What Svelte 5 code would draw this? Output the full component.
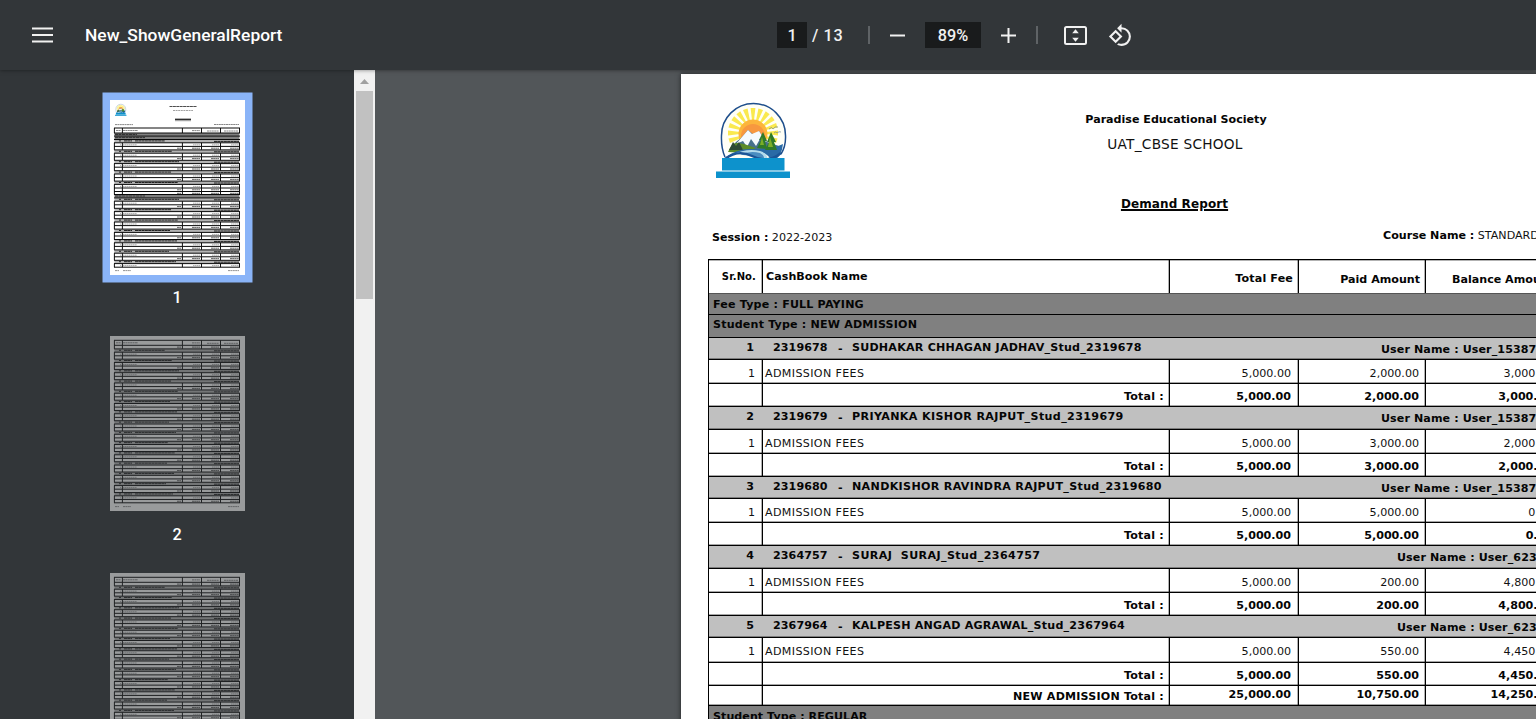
<script>
  const groups = [
    { no: 1, id: '2319678', name: 'SUDHAKAR CHHAGAN JADHAV_Stud_2319678', ls: .22, user: 'User_15387', ux: 672, paid: '2,000.00', bal: '3,000.00', h: [22, 24, 23] },
    { no: 2, id: '2319679', name: 'PRIYANKA KISHOR RAJPUT_Stud_2319679', ls: .37, user: 'User_15387', ux: 672, paid: '3,000.00', bal: '2,000.00', h: [23, 24, 23] },
    { no: 3, id: '2319680', name: 'NANDKISHOR RAVINDRA RAJPUT_Stud_2319680', ls: .33, user: 'User_15387', ux: 672, paid: '5,000.00', bal: '0.00', h: [22, 24, 23] },
    { no: 4, id: '2364757', name: 'SURAJ\u00a0 SURAJ_Stud_2364757', ls: .4, user: 'User_623', ux: 688, paid: '200.00', bal: '4,800.00', h: [23, 24, 23] },
    { no: 5, id: '2367964', name: 'KALPESH ANGAD AGRAWAL_Stud_2367964', ls: .21, user: 'User_623', ux: 688, paid: '550.00', bal: '4,450.00', h: [22, 25, 23] }
  ];

  const cols = [4.4, 12.4, 72.4, 91.5, 110.5, 129.5];

  // Builds the miniature rows: kind is head, dark, band, row or sum
  function mini(first) {
    const out = [];
    let y = first ? 28 : 4.3;
    const add = (kind, h, seed = 0) => { out.push({ kind, y, h, seed }); y += h; };
    add('head', 5);
    if (first) {
      add('dark', 3.1); add('dark', 3.4);
      for (let i = 0; i < 5; i++) { add('band', 3.3, i); add('row', 3.6); add('sum', 3.5); }
      add('sum', 3); add('dark', 3.4);
      for (let i = 0; i < 7; i++) { add('band', 3.3, i + 2); add('row', 3.6); if (i < 6) add('sum', 3.5); }
    } else {
      add('sum', 3.6);
      for (let i = 0; i < 15; i++) { add('band', 3.3, i); add('row', 3.6); add('sum', 3.36); }
    }
    return { rows: out, end: y };
  }
  const thumbs = [
    { n: 1, first: true, ...mini(true) },
    { n: 2, first: false, ...mini(false) },
    { n: 3, first: false, ...mini(false) }
  ];
  const rays = Array.from({ length: 13 }, (_, i) => -108 + i * 18);
</script>

{#snippet logo()}
  <circle cx="37.500" cy="33" r="31" fill="#fffff6" />
  <g transform="translate(37 31)">
    {#each rays as a}
      <path d="M-1-13 L-2.400-25 L2.400-25 L1-13Z" fill="#fae94e" transform="rotate({a})" />
    {/each}
  </g>
  <circle cx="37" cy="32" r="14.500" fill="#fcb53c" />
  <circle cx="37" cy="34" r="12" fill="#f7983f" />
  <path d="M14 47 L20 40 L25 36 L32 28 L38 33 L43 29 L51 40 L63 44 L62 49 L28 51Z" fill="#46708c" />
  <path d="M20 42 L26 35 L32 28 L36 32 L43 29 L50 40 L44 37 L40 44 L35 37 L31 45 L27 39Z" fill="#f5fafd" />
  <path d="M12 50 Q16 40 22 41 L28 42 L40 46 L29 51Z" fill="#5b8c28" />
  <path d="M13 48 L17 40 L20 44 L23 40 L27 48Z" fill="#2c4a34" />
  <path d="M8 56 Q22 46 36 47 Q54 48 67 42 Q66 56 54 61 Q56 53 44 50 Q26 48 8 56Z" fill="#2a6aa6" />
  <path d="M16 53 Q30 46 44 49 Q54 52 50 60 Q33 50 16 53Z" fill="#b4dbec" />
  <path d="M24 53 Q34 48 44 51 Q50 54 48 60 Q37 52 24 53Z" fill="#4a8cc0" />
  <path d="M41 46 L45 38 L43 38 L47 30 L51 39 L49 39 L51 47Z M49 48 L53 40 L51 40 L55 30 L60 40 L58 40 L61 48Z" fill="#2f7a28" />
  <path d="M46 35 L48 43 L44 43Z M54 35 L57 45 L52 45Z" fill="#7cae28" />
  <path d="M9 55 Q5 46 5.500 33.500 A32 32 0 0 1 69.500 33.500 Q70 44 65 52" fill="none" stroke="#1f4f8c" stroke-width="1.500" />
  <path d="M9 57 Q22 47 36 54 Q52 62 65 51" fill="none" stroke="#1c5596" stroke-width="2.400" />
  <path d="M53 27 q3-3 4 0 q2-3 5-2 M58 31 q2-2 3 0 q2-2 4-1" fill="none" stroke="#6e858f" stroke-width=".7" />
  <rect x="6" y="56" width="62.500" height="12.500" fill="#0d92cc" />
  <rect x="0" y="69.500" width="74" height="6.500" fill="#0d92cc" />
{/snippet}

{#snippet thumb(t)}
  <svg viewBox="0 0 135 175" width="135" height="175">
    <rect width="135" height="175" fill="#fff" />
    {#if t.first}
      <g transform="translate(5 4) scale(.155)">{@render logo()}</g>
      <g stroke="#222" fill="none">
        <path d="M59.5 6.500H87" stroke-width="1" stroke-dasharray="3 .4" opacity=".8" />
        <path d="M63 10.500H83" stroke-width=".7" stroke-dasharray="2 .6" opacity=".6" />
        <path d="M65 19.300H81" stroke-width="1.300" /><path d="M65 20.700H81" stroke-width=".5" />
        <path d="M5 24.600H23M104 24.500H129" stroke-width=".9" stroke-dasharray="2 .4" opacity=".6" />
      </g>
    {/if}
    {#each t.rows as r}
      {#if r.kind === 'dark'}
        <rect x="4.400" y={r.y} width="125" height={r.h} fill="#808080" />
        <path d="M5 {r.y + 1.5}H{r.y > 34 ? 35 : 27}" stroke="#333" stroke-width="1" stroke-dasharray="3 .5" />
      {:else if r.kind === 'band'}
        <rect x="4.400" y={r.y} width="125" height={r.h} fill="#b4b4b4" />
        <path d="M9 {r.y + 1.4}h2M14 {r.y + 1.4}h8M25 {r.y + 1.4}H{55 + (r.seed * 7) % 15}M104 {r.y + 1.9}h25" stroke="#222" stroke-width="1" stroke-dasharray="3 .3" />
      {:else}
        {#each cols as x}<path d="M{x} {r.y}v{r.h}" stroke="#111" stroke-width="1" />{/each}
        {#if r.kind === 'head'}
          <path d="M6 {r.y + 2.5}h5M13 {r.y + 2.5}h15M82 {r.y + 2.6}h8M97 {r.y + 3}h12M114 {r.y + 3}h14" stroke="#555" stroke-width=".7" stroke-dasharray="2 .4" />
        {:else if r.kind === 'row'}
          <path d="M10 {r.y + 2}h1M13 {r.y + 2}h14M83 {r.y + 2}h7M102 {r.y + 2}h7M121 {r.y + 2}h8" stroke="#888" stroke-width=".7" stroke-dasharray="1.6 .4" />
        {:else}
          <path d="M67 {r.y + 1.8}h4M82 {r.y + 1.8}h8M101 {r.y + 1.8}h8M120 {r.y + 1.8}h9" stroke="#555" stroke-width=".9" stroke-dasharray="2 .2" />
        {/if}
      {/if}
      <path d="M4 {r.y}H130" stroke="#0a0a0a" stroke-width="1" />
    {/each}
    <path d="M4 {t.end}H130" stroke="#0a0a0a" stroke-width="1" />
    <path d="M5 170.600h4M13 170.600h8M118 170.600h11" stroke="#666" stroke-width=".7" stroke-dasharray="2 .4" />
  </svg>
{/snippet}

<div class="viewer">
  <header>
    <div class="start">
      <svg class="menu" width="21" height="16" viewBox="0 0 21 16"><path d="M0 1.500h21M0 8h21M0 14.500h21" stroke="#f1f1f1" stroke-width="2.200" /></svg>
      <span class="title">New_ShowGeneralReport</span>
    </div>
    <div class="controls">
      <span class="field page-no">1</span><span class="count">/ 13</span>
      <i class="sep"></i>
      <svg class="minus" width="16" height="16" viewBox="0 0 16 16"><path d="M0 8.500h15" stroke="#f1f1f1" stroke-width="2" /></svg>
      <span class="field zoom">89%</span>
      <svg class="plus" width="16" height="16" viewBox="0 0 16 16"><path d="M0 8.500h15M7.500 1v15" stroke="#f1f1f1" stroke-width="2" /></svg>
      <i class="sep two"></i>
      <svg class="fit" width="23" height="19" viewBox="0 0 23 19"><rect x="1" y="1" width="21" height="17" rx="1.500" fill="none" stroke="#f1f1f1" stroke-width="2" /><path d="M11.500 3.200l3.300 4H8.200ZM11.500 15.800l3.300-4H8.200Z" fill="#f1f1f1" /></svg>
      <svg class="rotate" width="25" height="25" viewBox="0 0 24 24"><path d="M7.340 6.410.86 12.900l6.490 6.480 6.490-6.480-6.500-6.490ZM3.690 12.900l3.660-3.660L11 12.900l-3.660 3.660-3.650-3.660ZM19.360 6.640A8.950 8.950 0 0 0 13 4V.76L8.760 5 13 9.240V6c1.790 0 3.580.68 4.950 2.050a7.007 7.007 0 0 1 0 9.900A6.973 6.973 0 0 1 13 20c-.97 0-1.940-.21-2.840-.61l-1.490 1.490C10.020 21.620 11.510 22 13 22c2.300 0 4.610-.88 6.360-2.640a8.980 8.980 0 0 0 0-12.720Z" fill="#f1f1f1" /></svg>
    </div>
  </header>
  <main>
    <aside>
      {#each thumbs as t}
        <div class="thumb" class:active={t.first}>
          <div class="sheet">{@render thumb(t)}</div>
          <span>{t.n}</span>
        </div>
      {/each}
    </aside>
    <div class="scroll">
      <svg width="21" height="21" viewBox="0 0 21 21"><path d="M6 14l4.500-5 4.500 5Z" fill="#a0a0a0" /></svg>
      <div class="handle"></div>
    </div>
    <section class="canvas">
      <article>
        <div class="top">
          <svg class="logo" width="74" height="76" viewBox="0 0 74 76">{@render logo()}</svg>
          <div class="heads">
            <b class="society">Paradise Educational Society</b>
            <span class="school">UAT_CBSE SCHOOL</span>
            <b class="report">Demand Report</b>
          </div>
        </div>
        <div class="meta">
          <span><b>Session :</b> 2022-2023</span>
          <span class="course"><b>Course Name :</b> STANDARD</span>
        </div>
        <div class="table">
          <div class="row head">
            <b class="c sr">Sr.No.</b><b class="c cb">CashBook Name</b><b class="c tf">Total Fee</b><b class="c pa">Paid Amount</b><b class="c ba">Balance Amount</b>
          </div>
          <div class="dark fee"><b>Fee Type : FULL PAYING</b></div>
          <div class="dark stu"><b>Student Type : NEW ADMISSION</b></div>
          {#each groups as g}
            <div class="band" style:height="{g.h[0]}px">
              <b class="n">{g.no}</b><b class="id">{g.id}</b><b class="dash">-</b><b style:letter-spacing="{g.ls}px">{g.name}</b>
              <b class="user" style:left="{g.ux}px">User Name : {g.user}</b>
            </div>
            <div class="row item" style:height="{g.h[1]}px">
              <span class="c num">1</span><span class="c fees">ADMISSION FEES</span><span class="c amt">5,000.00</span><span class="c">{g.paid}</span><span class="c">{g.bal}</span>
            </div>
            <div class="row total" style:height="{g.h[2]}px">
              <b class="c"></b><b class="c lab">Total :</b><b class="c amt">5,000.00</b><b class="c">{g.paid}</b><b class="c">{g.bal}</b>
            </div>
          {/each}
          <div class="row total grand">
            <b class="c"></b><b class="c lab">NEW ADMISSION Total :</b><b class="c amt">25,000.00</b><b class="c">10,750.00</b><b class="c">14,250.00</b>
          </div>
          <div class="dark reg"><b>Student Type : REGULAR</b></div>
        </div>
      </article>
    </section>
  </main>
</div>

<style>
  :global(body) { margin: 0; overflow: hidden; }
  .viewer { width: 1536px; height: 719px; overflow: hidden; display: flex; flex-direction: column; background: #525659; font-family: Roboto, sans-serif; color: #f1f1f1; }
  header { height: 70px; flex: none; background: #323639; display: flex; align-items: center; position: relative; z-index: 2; box-shadow: 0 0 4px rgba(0, 0, 0, .5); }
  .start { width: 777px; display: flex; align-items: center; }
  .menu { margin-left: 32px; }
  .title { margin-left: 32px; font-size: 17.400px; font-weight: 500; line-height: 20px; color: #fff; }
  .controls { display: flex; align-items: center; font-size: 16.250px; font-weight: 500; }
  .field { background: #191b1c; height: 25px; padding-top: 1px; line-height: 25px; text-align: center; }
  .page-no { width: 30px; }
  .count { margin-left: 5px; width: 56px; letter-spacing: .6px; padding-top: 1px; }
  .sep { width: 2px; height: 18px; background: #5f6366; }
  .minus { margin-left: 20px; }
  .zoom { width: 56px; margin-left: 19px; }
  .plus { margin-left: 20px; }
  .two { margin-left: 19px; }
  .fit { margin-left: 26px; }
  .rotate { margin-left: 21px; }
  main { flex: 1; min-height: 0; display: flex; }
  aside { width: 354px; flex: none; background: #323639; overflow: hidden; padding-top: 21.600px; box-sizing: border-box; }
  .thumb { display: flex; flex-direction: column; align-items: center; height: 236.500px; }
  .sheet { width: 135px; height: 175px; margin: 8px; opacity: .5; flex: none; }
  .sheet svg { display: block; }
  .active .sheet { box-shadow: 0 0 0 7.500px #8ab4f8; opacity: 1; }
  .thumb span { font-size: 16.250px; line-height: 18px; font-weight: 500; color: #fff; margin-top: 6.500px; }
  .scroll { width: 21px; flex: none; background: #f1f1f1; display: flex; flex-direction: column; align-items: center; }
  .handle { width: 17px; height: 208px; background: #c1c1c1; }
  .canvas { flex: 1; min-width: 0; overflow: hidden; padding: 4px 0 0 306px; }
  article { width: 912px; height: 1182px; box-sizing: border-box; padding-left: 27px; background: #fff; box-shadow: 0 0 5px rgba(0, 0, 0, .6); color: #111; font-family: "DejaVu Sans", Verdana, sans-serif; font-size: 11.100px; }
  b { color: #050505; }
  .top { height: 148px; display: flex; padding: 0 0 0 8px; }
  .logo { margin-top: 28px; flex: none; }
  .heads { margin-left: 236px; width: 300px; display: flex; flex-direction: column; align-items: center; white-space: nowrap; }
  .society { margin-top: 38px; line-height: 16px; }
  .school { margin-top: 7px; font-size: 13.700px; line-height: 18px; letter-spacing: .25px; margin-right: 2px; }
  .report { margin: 43px 3px 0 0; line-height: 16px; font-size: 12px; letter-spacing: .1px; text-decoration: underline; text-decoration-thickness: 1.500px; text-underline-offset: 1px; }
  .meta { display: flex; height: 37px; padding: 8px 0 0 4px; box-sizing: border-box; line-height: 16px; white-space: nowrap; }
  .course { margin: -2px 0 0 auto; width: 210px; }
  .table { width: 851px; border-left: 1px solid #000; border-top: 1px solid #000; box-shadow: inset 0 1px rgba(0, 0, 0, .3); white-space: nowrap; }
  .row { display: grid; grid-template-columns: 54px 407px 129px 127px 134px; border-bottom: 1px solid #000; box-sizing: border-box; box-shadow: inset 0 -1px rgba(0, 0, 0, .35); }
  .c { border-right: 1px solid #000; box-shadow: inset -1px 0 rgba(0, 0, 0, .3); text-align: right; padding-right: 6px; line-height: 16px; }
  .amt { padding-right: 7px; }
  .head { height: 34px; border-bottom-color: #555; box-shadow: none; padding: 0; }
  .head .c { padding-top: 9px; }
  .head .sr { font-size: 10px; letter-spacing: .1px; }
  .head .cb { text-align: left; padding-left: 3px; letter-spacing: .05px; }
  .head .tf { padding-top: 11px; padding-right: 5px; letter-spacing: .15px; }
  .head .pa, .head .ba { padding-top: 12px; padding-right: 5px; }
  .dark { background: #808080; border-bottom: 1px solid #000; box-sizing: border-box; padding-left: 4px; line-height: 16px; letter-spacing: .18px; }
  .fee { height: 21px; padding-top: 3px; }
  .stu { height: 23px; padding-top: 2px; }
  .band { background: #c0c0c0; border-bottom: 1px solid #000; box-sizing: border-box; box-shadow: inset 0 -1px rgba(0, 0, 0, .35); display: flex; line-height: 16px; padding-top: 2px; position: relative; }
  .n { width: 45px; text-align: right; }
  .id { width: 65px; padding-left: 19px; letter-spacing: .08px; }
  .dash { width: 14px; padding-top: 1px; }
  .user { position: absolute; top: 4px; letter-spacing: .1px; }
  .item .c { padding-top: 6px; }
  .item .num { padding-right: 7px; }
  .item .fees { text-align: left; padding-left: 2px; letter-spacing: .36px; }
  .total .c { padding-top: 5px; }
  .total .lab { padding-right: 5px; letter-spacing: .2px; }
  .grand { height: 20px; }
  .grand .c { padding-top: 1px; }
  .grand .lab { padding-top: 3px; }
  .reg { height: 23px; padding-top: 3px; letter-spacing: .05px; }
</style>
